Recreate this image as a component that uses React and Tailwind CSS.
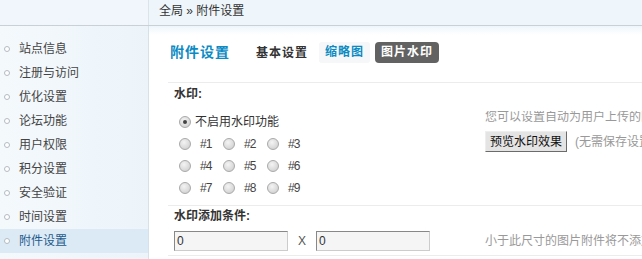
import React from "react";

const menu = [
  "站点信息",
  "注册与访问",
  "优化设置",
  "论坛功能",
  "用户权限",
  "积分设置",
  "安全验证",
  "时间设置",
  "附件设置",
];

function Radio({ checked }) {
  return (
    <span className="relative inline-block w-[12px] h-[12px] rounded-full border border-[#a9a9a9] bg-[radial-gradient(circle_at_40%_35%,#f4f4f4,#c9c9c9)] shrink-0">
      {checked && (
        <span className="absolute left-[3px] top-[3px] w-[4px] h-[4px] rounded-full bg-[#444]" />
      )}
    </span>
  );
}

function Option({ label }) {
  return (
    <div className="flex items-center w-[44px]">
      <Radio />
      <span className="ml-[9px] text-[#444] tracking-[-1px]">{label}</span>
    </div>
  );
}

export default function App() {
  return (
    <div
      className="w-[642px] h-[259px] overflow-hidden text-[12px] text-[#333] bg-white"
      style={{ fontFamily: '"Liberation Sans", "Noto Sans CJK SC", sans-serif' }}
    >
      {/* top bar */}
      <div className="flex h-[26px] border-b border-[#c9d1d7] bg-[#eef6fb]">
        <div className="w-[149px] shrink-0 border-r border-[#dbe4eb] bg-[#f0f6fb]" />
        <div className="pl-[10px] leading-[22px] text-[#333]">全局 » 附件设置</div>
      </div>

      <div className="flex h-[233px]">
        {/* sidebar */}
        <ul className="w-[149px] shrink-0 border-r border-[#d7e1e9] bg-[linear-gradient(90deg,#f4f9fc,#ecf4fa)] pt-[11px]">
          {menu.map((m, i) => {
            const active = i === menu.length - 1;
            return (
              <li
                key={m}
                className={
                  "flex items-center h-[24px] pl-[4px] whitespace-nowrap " +
                  (active ? "bg-[#dceaf6] text-[#1f5b8c]" : "text-[#444]")
                }
              >
                <span className="w-[6px] h-[6px] shrink-0 rounded-full border border-[#b4bcc2] bg-white" />
                <span className="ml-[9px]">{m}</span>
              </li>
            );
          })}
        </ul>

        {/* main */}
        <div className="flex-1 min-w-0 bg-[linear-gradient(180deg,#eef6fb,#ffffff_9px)]">
          <div className="flex items-center h-[21px] mt-[16px] pl-[21px] whitespace-nowrap">
            <h3 className="text-[14px] font-bold tracking-[1px] text-[#0c8ac3] w-[86px] shrink-0">附件设置</h3>
            <span className="font-bold tracking-[1px] text-[#333]">基本设置</span>
            <span className="ml-[11px] px-[6px] h-[21px] leading-[21px] rounded-[3px] bg-[#f5f7f8] font-bold tracking-[1px] text-[#0b8bc2]">
              缩略图
            </span>
            <span className="ml-[5px] px-[6px] h-[21px] leading-[21px] rounded-[4px] bg-[#626262] font-bold tracking-[1px] text-white">
              图片水印
            </span>
          </div>

          <div className="ml-[19px] mt-[19px] border-t border-[#ececec]">
            <div className="h-[22px] leading-[22px] pl-[6px] font-bold text-[#333]">水印:</div>
            <div className="flex border-b border-[#ececec] pt-[6px] pb-[6px]">
              <div className="w-[317px] shrink-0 pl-[11px]">
                <div className="flex items-center h-[22px]">
                  <Radio checked />
                  <span className="ml-[4px] text-[#333]">不启用水印功能</span>
                </div>
                {[
                  ["#1", "#2", "#3"],
                  ["#4", "#5", "#6"],
                  ["#7", "#8", "#9"],
                ].map((row) => (
                  <div key={row[0]} className="flex items-center h-[22px]">
                    {row.map((o) => (
                      <Option key={o} label={o} />
                    ))}
                  </div>
                ))}
              </div>
              <div className="flex-1 min-w-0 text-[#999] whitespace-nowrap overflow-hidden">
                <div className="leading-[12px] mt-[0px]">您可以设置自动为用户上传的图片附件添加水印</div>
                <div className="flex items-center mt-[8px]">
                  <button className="h-[21px] px-[4px] shrink-0 border border-t-[#eee] border-l-[#eee] border-r-[#6b6b6b] border-b-[#6b6b6b] bg-[#e4e4e4] text-[#111] text-[12px]">
                    预览水印效果
                  </button>
                  <span className="ml-[8px]">(无需保存设置即可预览)</span>
                </div>
              </div>
            </div>

            <div className="h-[20px] leading-[20px] pl-[6px] font-bold text-[#333]">水印添加条件:</div>
            <div className="flex items-center border-b border-[#ececec] pt-[5px] pb-[4px]">
              <div className="w-[317px] shrink-0 pl-[6px] flex items-center">
                <input
                  defaultValue="0"
                  className="w-[114px] h-[20px] px-[2px] border border-[#888] border-r-[#ccc] border-b-[#ccc] bg-[#f5f5f5] text-[12px] text-[#333] outline-none"
                />
                <span className="w-[28px] text-center text-[#555]">X</span>
                <input
                  defaultValue="0"
                  className="w-[114px] h-[20px] px-[2px] border border-[#888] border-r-[#ccc] border-b-[#ccc] bg-[#f5f5f5] text-[12px] text-[#333] outline-none"
                />
              </div>
              <div className="flex-1 min-w-0 text-[#999] whitespace-nowrap overflow-hidden">
                小于此尺寸的图片附件将不添加水印
              </div>
            </div>
          </div>
        </div>
      </div>
    </div>
  );
}
